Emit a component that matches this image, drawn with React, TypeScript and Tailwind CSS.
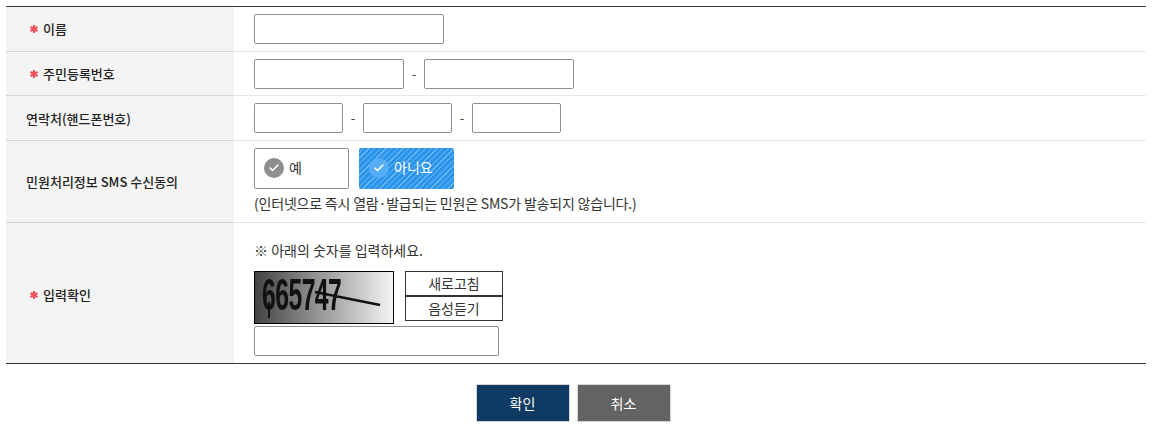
import { Check } from "lucide-react";

const inputClass = "h-[30px] rounded-[2px] border border-[#8f8f8f] bg-white";

function Row({
  label,
  required,
  last,
  className,
  labelClass = "",
  children,
}: {
  label: string;
  required?: boolean;
  last?: boolean;
  className: string;
  labelClass?: string;
  children: React.ReactNode;
}) {
  return (
    <div className={`flex ${className}`}>
      <div className={`flex w-[228px] shrink-0 items-center bg-[#f4f4f4] text-[13px] font-medium text-[#222] ${required ? "pl-[24px]" : "pl-[20px]"} ${last ? "" : "border-b border-[#d4d4d4]"} ${labelClass}`}>
        {required && (
          <svg className="mr-[5px] shrink-0" width="8" height="8" viewBox="0 0 8 8">
            <path d="M4 0v8M0.5 2l7 4M7.5 2l-7 4" stroke="#f0505c" strokeWidth="2.1" fill="none" />
          </svg>
        )}
        <span>{label}</span>
      </div>
      <div className={`flex-1 pl-[20px] ${last ? "" : "border-b border-[#e8e8e8]"}`}>{children}</div>
    </div>
  );
}

function Dash() {
  return <span className="w-[20px] text-center text-[13px] text-[#444]">-</span>;
}

export default function App() {
  return (
    <div className="h-[430px] w-[1161px] overflow-hidden bg-white pl-[6px] pr-[15px] pt-[6px] font-['Noto_Sans_CJK_KR','Noto_Sans',sans-serif]">
      <div className="border-t border-b border-[#333]">
        <Row label="이름" required className="h-[45px]">
          <div className="pt-[7px]">
            <div className={`${inputClass} w-[190px]`} />
          </div>
        </Row>
        <Row label="주민등록번호" required className="h-[44px]">
          <div className="flex items-center pt-[7px]">
            <div className={`${inputClass} w-[150px]`} />
            <Dash />
            <div className={`${inputClass} w-[150px]`} />
          </div>
        </Row>
        <Row label="연락처(핸드폰번호)" labelClass="pt-[2px]" className="h-[45px]">
          <div className="flex items-center pt-[7px]">
            <div className={`${inputClass} w-[89px]`} />
            <Dash />
            <div className={`${inputClass} w-[89px]`} />
            <Dash />
            <div className={`${inputClass} w-[89px]`} />
          </div>
        </Row>
        <Row label="민원처리정보 SMS 수신동의" className="h-[82px]">
          <div className="pt-[7px]">
            <div className="flex gap-[10px]">
              <div className="flex h-[41px] w-[95px] items-start rounded-[2px] border border-[#8f8f8f] pl-[9px] pt-[9px]">
                <span className="flex h-[20px] w-[20px] items-center justify-center rounded-full bg-[#8e8e8e]">
                  <Check className="h-[12px] w-[12px] text-white" strokeWidth={3} />
                </span>
                <span className="ml-[5px] text-[14px] leading-[18px] text-[#333]">예</span>
              </div>
              <div className="flex h-[41px] w-[95px] items-start rounded-[2px] bg-[#2b95ec] bg-[repeating-linear-gradient(135deg,#2b95ec_0px,#2b95ec_3px,#6db8f3_3px,#6db8f3_4px)] pl-[10px] pt-[10px]">
                <span className="flex h-[20px] w-[20px] items-center justify-center rounded-full bg-[#55aef5]">
                  <Check className="h-[12px] w-[12px] text-white" strokeWidth={3} />
                </span>
                <span className="ml-[5px] text-[14px] leading-[18px] text-white">아니요</span>
              </div>
            </div>
            <p className="mt-[4px] text-[14px] leading-[20px] tracking-[-0.2px] text-[#333]">
              (인터넷으로 즉시 열람·발급되는 민원은 SMS가 발송되지 않습니다.)
            </p>
          </div>
        </Row>
        <Row label="입력확인" required last labelClass="pt-[4px]" className="h-[140px]">
          <div>
            <p className="pt-[17px] text-[14px] leading-[20px] text-[#333]">※ 아래의 숫자를 입력하세요.</p>
            <div className="mt-[11px] flex">
              <div className="relative h-[53px] w-[140px] border border-black bg-[linear-gradient(90deg,#444,#f4f4f4)]">
                <span className="absolute left-[7px] top-[-3px] origin-left scale-x-[0.55] font-['Liberation_Sans',sans-serif] text-[45px] font-bold leading-[52px] tracking-[-1px] text-[#111] blur-[0.7px]">
                  665747
                </span>
                <svg className="absolute inset-0 blur-[0.4px]" width="138" height="51" viewBox="0 0 138 51">
                  <path d="M60 20 L125 33" stroke="#111" strokeWidth="2.5" fill="none" />
                  <path d="M14 30 L14 46" stroke="#111" strokeWidth="2" fill="none" />
                </svg>
              </div>
              <div className="ml-[11px] flex flex-col">
                <div className="flex h-[25px] w-[98px] items-center justify-center border border-[#333] text-[14px] text-[#333]">새로고침</div>
                <div className="flex h-[25px] w-[98px] items-center justify-center border border-[#333] text-[14px] text-[#333]">음성듣기</div>
              </div>
            </div>
            <div className={`${inputClass} mt-[2px] w-[245px]`} />
          </div>
        </Row>
      </div>
      <div className="flex justify-center gap-[7px] pr-[6px] pt-[20px]">
        <div className="flex h-[38px] w-[94px] items-center justify-center border border-[#d5d5d5] bg-[#0e3a63] text-[14px] text-white">확인</div>
        <div className="flex h-[38px] w-[94px] items-center justify-center border border-[#d5d5d5] bg-[#636363] text-[14px] text-white">취소</div>
      </div>
    </div>
  );
}
